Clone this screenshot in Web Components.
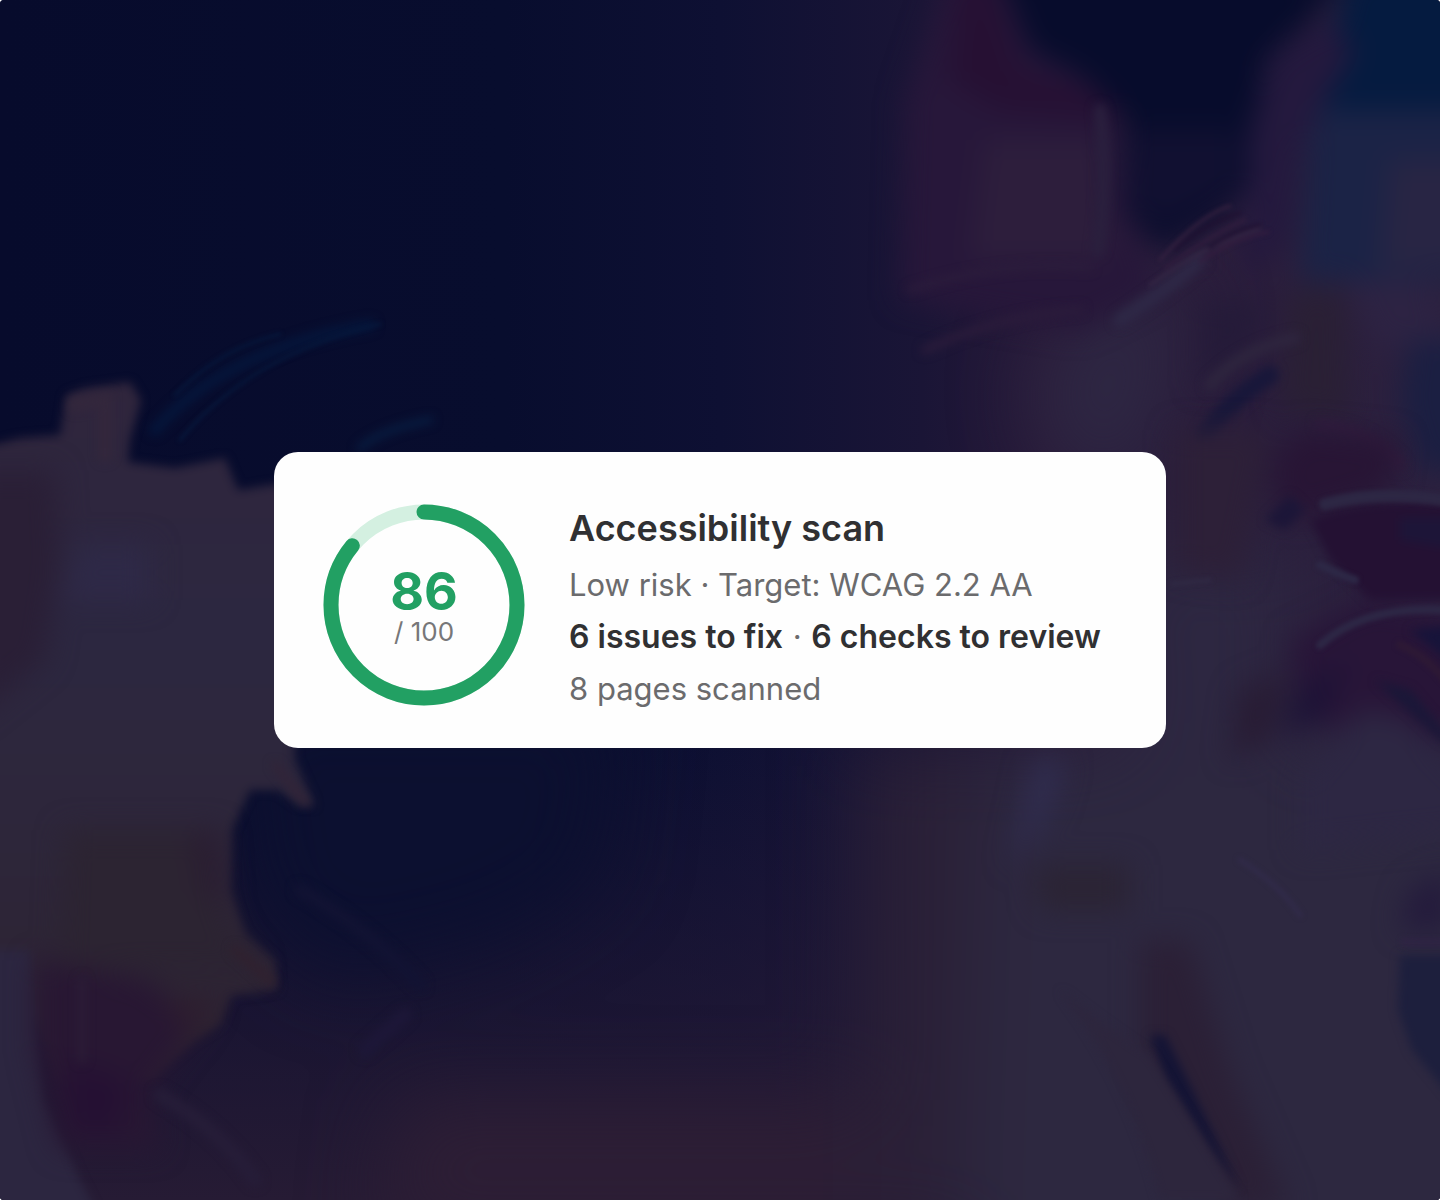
<!DOCTYPE html>
<html lang="en">
<head>
<meta charset="utf-8">
<meta name="viewport" content="width=device-width, initial-scale=1">
<title>Accessibility scan</title>
<style>
  body { margin: 0; background: #fff; font-family: Inter, "Liberation Sans", sans-serif; }
</style>
</head>
<body>
<painted-backdrop>
  <scan-card>
    <score-ring slot="score" value="86" max="100"></score-ring>
    <span slot="title">Accessibility scan</span>
    <span slot="target">Low risk · Target: WCAG 2.2 AA</span>
    <strong slot="issues">6 issues to fix</strong>
    <strong slot="checks">6 checks to review</strong>
    <span slot="pages">8 pages scanned</span>
  </scan-card>
</painted-backdrop>

<template id="backdrop-template">
  <style>
    :host { display: grid; min-height: 100vh; border-radius: 4px; overflow: hidden; background: #070c2c; }
    svg, main { grid-area: 1 / 1; }
    svg { display: block; width: 100%; height: 100%; min-height: 100vh; }
    filter { color-interpolation-filters: sRGB; }
    main { display: grid; place-items: center; z-index: 1; }
  </style>
  <svg viewBox="0 0 1440 1200" preserveAspectRatio="xMidYMid slice" aria-hidden="true">
    <defs>
      <linearGradient id="base" x1="0" y1="0" x2="1" y2="0">
        <stop offset="0" stop-color="#070b2c"/>
        <stop offset=".35" stop-color="#080d2e"/>
        <stop offset=".5" stop-color="#0e1033"/>
        <stop offset=".64" stop-color="#1a1536"/>
        <stop offset=".73" stop-color="#291a39"/>
        <stop offset="1" stop-color="#2c213f"/>
      </linearGradient>
      <linearGradient id="floor" x1="0" y1="0" x2="0" y2="1">
        <stop offset="0" stop-color="#261a37" stop-opacity="0"/>
        <stop offset="1" stop-color="#261b34"/>
      </linearGradient>
      <linearGradient id="petal" x1="0" y1="0" x2="0" y2="1">
        <stop offset="0" stop-color="#2f253c"/>
        <stop offset=".35" stop-color="#2c2740"/>
        <stop offset=".65" stop-color="#2d263a"/>
        <stop offset="1" stop-color="#2d2230"/>
      </linearGradient>
      <filter id="b2" x="-20%" y="-20%" width="140%" height="140%"><feGaussianBlur stdDeviation="2"/></filter>
      <filter id="b5" x="-30%" y="-30%" width="160%" height="160%"><feGaussianBlur stdDeviation="5"/></filter>
      <filter id="b12" x="-40%" y="-40%" width="180%" height="180%"><feGaussianBlur stdDeviation="14"/></filter>
      <filter id="b30" x="-60%" y="-60%" width="220%" height="220%"><feGaussianBlur stdDeviation="40"/></filter>
    </defs>
    <rect width="1440" height="1200" fill="url(#base)"/>
    <rect y="740" width="1440" height="460" fill="url(#floor)"/>

    <!-- broad colour washes -->
    <g filter="url(#b30)">
      <path d="M230 700H620L600 880 500 940 330 980 250 900Z" fill="#0c1030"/>
      <path d="M400 1100H900V1240H380Z" fill="#2d1e35"/>
      <path d="M860 740H1000V1240H860Z" fill="#2a2037"/>
      <path d="M980 740H1540V1300H960Z" fill="#2d2840"/>
      <path d="M1100 540H1300V760H1120Z" fill="#2d2741"/>
      <path d="M1030 380 1100 280 1190 300 1150 480H1060Z" fill="#2e2743"/>
    </g>

    <!-- upper right plumes -->
    <g filter="url(#b12)">
      <path d="M950-30H1010L1030 50 1110 90 1125 220 1160 290 1080 330 900 300 905 100Z" fill="#27173a"/>
      <path d="M960-20H990L1020 70 1110 95 1120 120 1000 110 950 80Z" fill="#261033"/>
      <path d="M985 140H1100L1110 260H970Z" fill="#2d1e3c"/>
      <path d="M998-30H1350L1310 20 1265 60 1245 190 1220 215 1160 250 1125 210 1125 115 1080 75 1030 50Z" fill="#070c2c"/>
      <path d="M1130 130H1235V190L1160 230 1125 200Z" fill="#111031"/>
      <path d="M1350-30H1480V130H1310Z" fill="#051b40"/>
      <path d="M1310 110H1480V280H1300Z" fill="#1b2346"/>
      <path d="M1390 160H1480V270H1380Z" fill="#282544"/>
      <path d="M1325 20 1355 50 1330 90 1300 150 1290 240 1245 280 1248 140 1270 60Z" fill="#24193e"/>
      <path d="M1345 280H1430L1450 340 1380 350Z" fill="#2d2343"/>
      <path d="M1410 340H1480V470H1420L1400 400Z" fill="#1b1f42"/>
      <path d="M1290 290H1345L1350 420 1280 410Z" fill="#2a2035"/>
      <path d="M1200 300H1270L1250 350 1200 390Z" fill="#251b39"/>
    </g>
    <g fill="none" stroke-linecap="round" filter="url(#b5)">
      <path d="M1100 110Q1108 180 1098 250" stroke="#2a203e" stroke-width="12"/>
      <path d="M1120 320Q1180 280 1200 260" stroke="#2e2846" stroke-width="14"/>
      <path d="M910 290Q1000 260 1090 268" stroke="#2c1d3c" stroke-width="6"/>
      <path d="M925 350Q1000 315 1080 310" stroke="#2b1c3b" stroke-width="8"/>
      <path d="M1205 435Q1230 400 1270 375" stroke="#18173a" stroke-width="18"/>
      <path d="M1210 385Q1240 350 1295 338" stroke="#2e253e" stroke-width="12"/>
      <path d="M1320 425Q1370 430 1400 465" stroke="#301d3e" stroke-width="12"/>
    </g>
    <g fill="none" stroke-linecap="round" stroke-width="3" filter="url(#b2)">
      <path d="M1160 260Q1200 215 1230 206" stroke="#34203f"/>
      <path d="M1165 268Q1215 232 1245 220" stroke="#311d3e"/>
      <path d="M1150 285Q1205 245 1260 228" stroke="#352745"/>
      <path d="M1200 262Q1230 240 1268 232" stroke="#331d3f"/>
      <path d="M1175 250Q1205 223 1240 213M1210 247Q1235 230 1260 225" stroke="#1f1031"/>
    </g>

    <!-- folds on the right -->
    <g filter="url(#b12)">
      <path d="M1175 430H1270L1240 580 1175 570Z" fill="#2d2038"/>
      <path d="M1270 470 1300 430 1400 440 1390 490 1290 520Z" fill="#281535"/>
      <path d="M1290 640 1370 600 1480 620V740L1340 730 1300 710Z" fill="#281538"/>
      <path d="M1300 690 1350 660 1320 720 1280 735Z" fill="#1c1236"/>
      <path d="M1240 690 1290 670 1270 740 1230 760Z" fill="#281c34"/>
      <path d="M1300 780 1360 710 1410 720 1480 790V830L1300 850Z" fill="#2d2743"/>
    </g>
    <g filter="url(#b5)">
      <path d="M1310 520Q1370 495 1460 506V600H1370L1330 560Z" fill="#241133"/>
      <path d="M1400 518H1460V550L1400 540Z" fill="#1d1538"/>
      <path d="M1265 520 1290 495 1305 510 1285 530Z" fill="#1c1638"/>
      <path d="M1410 630 1460 625V670Z" fill="#17143a"/>
      <path d="M1375 680 1410 690 1460 750 1440 740Z" fill="#1a1738"/>
    </g>
    <g fill="none" stroke-linecap="round" filter="url(#b2)">
      <path d="M1325 504Q1380 490 1445 500" stroke="#2d2744" stroke-width="12"/>
      <path d="M1320 565Q1340 575 1355 580" stroke="#2d2846" stroke-width="8"/>
      <path d="M1320 645Q1365 605 1445 610" stroke="#2d2745" stroke-width="8"/>
      <path d="M1172 584 1210 580" stroke="#302a44" stroke-width="4"/>
      <path d="M1400 645Q1425 655 1445 680" stroke="#2d1935" stroke-width="8"/>
      <path d="M1240 860Q1280 885 1300 915" stroke="#302a47" stroke-width="6"/>
      <path d="M1405 942H1445" stroke="#302644" stroke-width="10"/>
    </g>

    <!-- lower right -->
    <g filter="url(#b12)">
      <path d="M1035 760H1065L1050 810 1010 870Z" fill="#302d50"/>
      <path d="M1035 865H1130V910H1040Z" fill="#2b2434"/>
      <path d="M1140 940H1190L1230 1070 1290 1210H1230L1140 1060Z" fill="#2b2036"/>
      <path d="M1410 890 1450 870V930H1400Z" fill="#241b3c"/>
    </g>
    <path d="M1400 955H1470V1120L1412 1050 1398 1010Z" fill="#1d1f3d" filter="url(#b5)"/>
    <path d="M1150 1035 1165 1035 1190 1085 1240 1190 1210 1150 1165 1080Z" fill="#141435" filter="url(#b5)"/>
    <path d="M1060 990Q1110 1030 1150 1055L1240 1200H1160Q1130 1080 1060 990Z" fill="#2d263d" filter="url(#b5)"/>

    <!-- left flower -->
    <g filter="url(#b5)">
      <path d="M-30 450 20 438 60 435 66 395 85 388 130 382 141 400 130 440 128 462 175 468 225 458 238 490 290 482 295 760 315 806 300 806 278 790 250 790 232 830 230 890 245 935 275 960 278 990 232 995 220 1025 195 1040 150 1080 60 1080 30 1000-30 1000Z" fill="url(#petal)"/>
      <path d="M-30 950 30 950 45 1100 80 1180 105 1230H-30Z" fill="#2c2640"/>
    </g>
    <g filter="url(#b12)">
      <path d="M65 830 215 830 220 890 235 935 255 960 258 975 200 970 60 970Z" fill="#2c2432"/>
      <path d="M-30 470H55L60 560 45 660-30 720Z" fill="#2a1f36"/>
      <path d="M75 545H150V600H60Z" fill="#2e2947"/>
      <path d="M35 960 150 980 195 1030 150 1090 160 1150 60 1150 35 1050Z" fill="#281733"/>
      <path d="M65 1060 130 1080 120 1130H70Z" fill="#251033"/>
      <path d="M190 830H220L225 910 200 890Z" fill="#2a1d31"/>
      <path d="M165 1000H215L190 1040Z" fill="#2e1d2e"/>
    </g>
    <g fill="none" stroke-linecap="round" filter="url(#b5)">
      <path d="M75 405 105 400V455" stroke="#33273c" stroke-width="14"/>
      <path d="M160 1095Q220 1130 255 1180" stroke="#261d38" stroke-width="14"/>
      <path d="M82 980V1060" stroke="#2c1d37" stroke-width="7"/>
      <path d="M235 950 270 980" stroke="#30212f" stroke-width="9"/>
      <path d="M275 765 305 803" stroke="#332337" stroke-width="6"/>
      <path d="M155 430Q225 350 370 325" stroke="#05153a" stroke-width="12"/>
      <path d="M360 448Q380 430 430 420" stroke="#081d41" stroke-width="7"/>
      <path d="M365 1050 405 1015" stroke="#1d1738" stroke-width="14"/>
      <path d="M300 890Q370 930 420 985" stroke="#121333" stroke-width="12"/>
    </g>
    <g fill="none" stroke-linecap="round" stroke-width="3" filter="url(#b2)">
      <path d="M180 440Q250 355 380 324M175 395Q220 348 280 334" stroke="#06183c"/>
    </g>
  </svg>
  <main><slot></slot></main>
</template>

<template id="card-template">
  <style>
    :host { display: block; width: 100%; max-width: 892px; }
    article {
      display: flex; align-items: flex-start; gap: 44px;
      box-sizing: border-box; padding: 52px 49px 33px;
      border-radius: 24px; background: #fefefe; color: #6b6b6d;
    }
    .copy { display: flex; flex-direction: column; }
    h1 { margin: 0 0 7px; font-size: 36px; line-height: 48px; font-weight: 600; color: #303032; }
    p { margin: 0; font-size: 31px; line-height: 52px; }
    .dot { margin: 0 1px; }
    ::slotted(strong) { font-size: 32px; font-weight: 600; color: #303032; }
  </style>
  <article>
    <slot name="score"></slot>
    <div class="copy">
      <h1><slot name="title"></slot></h1>
      <p><slot name="target"></slot></p>
      <p><slot name="issues"></slot> <span class="dot">·</span> <slot name="checks"></slot></p>
      <p><slot name="pages"></slot></p>
    </div>
  </article>
</template>

<template id="ring-template">
  <style>
    :host { display: grid; flex: none; width: 202px; height: 202px; }
    svg, .label { grid-area: 1 / 1; }
    svg { display: block; width: 100%; height: 100%; }
    circle { fill: none; stroke-width: 15; }
    .track { stroke: #d4f0e1; }
    .arc { stroke: #22a063; stroke-linecap: round; }
    .label { display: flex; flex-direction: column; align-items: center; justify-content: center; padding-top: 6px; }
    .value { font-size: 52px; line-height: 48px; font-weight: 700; color: #22a063; }
    .max { font-size: 26px; line-height: 32px; color: #777779; }
  </style>
  <svg viewBox="0 0 202 202" aria-hidden="true">
    <circle class="track" cx="101" cy="101" r="93"/>
    <circle class="arc" cx="101" cy="101" r="93" pathLength="100" transform="rotate(-90 101 101)"/>
  </svg>
  <div class="label"><span class="value"></span><span class="max"></span></div>
</template>

<script>
  class TemplateElement extends HTMLElement {
    constructor() {
      super();
      const template = document.getElementById(this.constructor.templateId);
      this.attachShadow({ mode: "open" }).append(template.content.cloneNode(true));
    }
  }
  class PaintedBackdrop extends TemplateElement { static templateId = "backdrop-template"; }
  class ScanCard extends TemplateElement { static templateId = "card-template"; }
  class ScoreRing extends TemplateElement {
    static templateId = "ring-template";
    connectedCallback() {
      const value = Number(this.getAttribute("value"));
      const max = Number(this.getAttribute("max"));
      const share = value / max * 100;
      this.shadowRoot.querySelector(".arc").setAttribute("stroke-dasharray", `${share} ${100 - share}`);
      this.shadowRoot.querySelector(".value").textContent = value;
      this.shadowRoot.querySelector(".max").textContent = `/ ${max}`;
    }
  }
  customElements.define("painted-backdrop", PaintedBackdrop);
  customElements.define("scan-card", ScanCard);
  customElements.define("score-ring", ScoreRing);
</script>
</body>
</html>
